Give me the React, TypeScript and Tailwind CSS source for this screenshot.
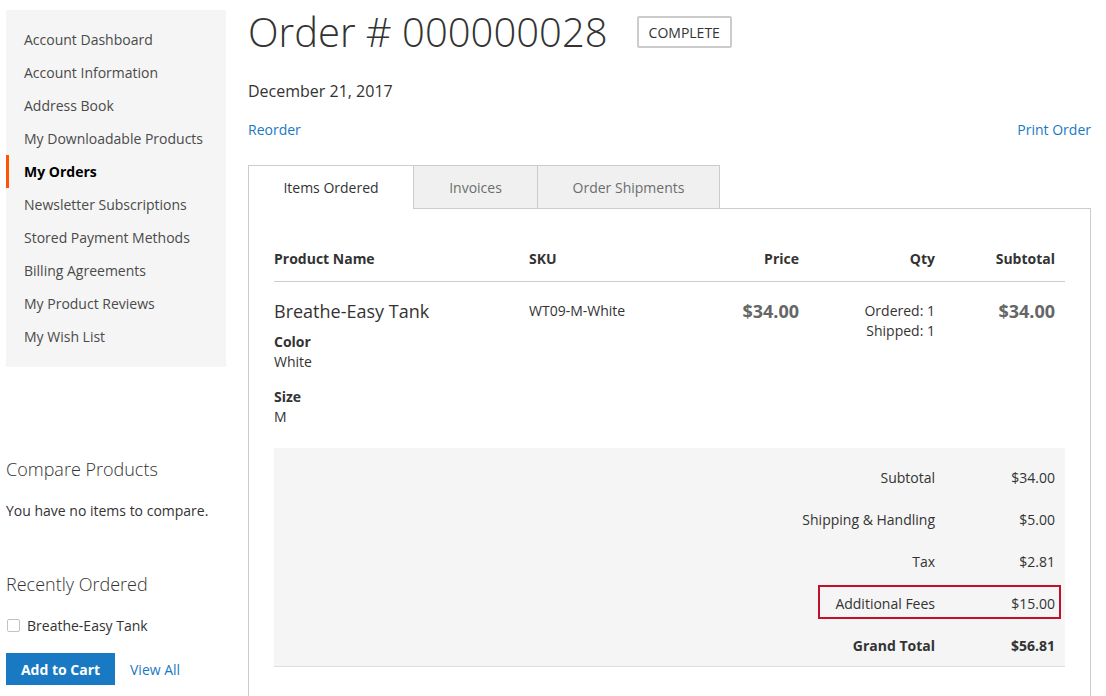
import { Fragment } from "react";

const navItems = [
  "Account Dashboard",
  "Account Information",
  "Address Book",
  "My Downloadable Products",
  "My Orders",
  "Newsletter Subscriptions",
  "Stored Payment Methods",
  "Billing Agreements",
  "My Product Reviews",
  "My Wish List",
];

const totals = [
  { label: "Subtotal", value: "$34.00" },
  { label: "Shipping & Handling", value: "$5.00" },
  { label: "Tax", value: "$2.81" },
  { label: "Additional Fees", value: "$15.00", highlight: true },
  { label: "Grand Total", value: "$56.81", strong: true },
];

function Sidebar() {
  return (
    <aside className="w-[220px] shrink-0 pt-[10px]">
      <nav className="bg-[#f5f5f5] pt-[13px] pb-[14px]">
        {navItems.map((item) =>
          item === "My Orders" ? (
            <div
              key={item}
              className="h-[33px] flex items-center border-l-[3px] border-[#ff5501] pl-[15px] text-[14px] font-bold text-black"
            >
              {item}
            </div>
          ) : (
            <div key={item} className="h-[33px] flex items-center pl-[18px] text-[14px] text-[#4a4a4a]">
              {item}
            </div>
          )
        )}
      </nav>

      <h3 className="mt-[90px] text-[18px] leading-[24px] font-light text-[#333]">Compare Products</h3>
      <p className="mt-[20px] text-[14px] leading-[20px] text-[#333]">You have no items to compare.</p>

      <h3 className="mt-[51px] text-[18px] leading-[24px] font-light text-[#333]">Recently Ordered</h3>
      <div className="mt-[19px] flex items-center h-[20px] text-[14px] text-[#333]">
        <span className="ml-px w-[13px] h-[13px] border border-[#c2c2c2] rounded-[2px] bg-white" />
        <span className="ml-[7px]">Breathe-Easy Tank</span>
      </div>
      <div className="mt-[18px] flex items-center">
        <button className="h-[32px] w-[109px] bg-[#1979c3] text-white text-[14px] font-bold">Add to Cart</button>
        <a className="ml-[15px] text-[14px] text-[#1979c3]">View All</a>
      </div>
    </aside>
  );
}

function OrderTable() {
  return (
    <div className="px-[25px] pt-[40px] pb-[30px]">
      <div className="grid grid-cols-[255px_170px_100px_136px_120px] pr-[10px] border-b border-[#ccc] pb-[12px] text-[14px] leading-[20px] font-bold text-[#333]">
        <div>Product Name</div>
        <div>SKU</div>
        <div className="text-right">Price</div>
        <div className="text-right">Qty</div>
        <div className="text-right">Subtotal</div>
      </div>

      <div className="grid grid-cols-[255px_170px_100px_136px_120px] pr-[10px] pt-[18px] text-[#333]">
        <div>
          <div className="text-[18px] leading-[22px]">Breathe-Easy Tank</div>
          <div className="mt-[10px] text-[14px] leading-[20px] font-bold">Color</div>
          <div className="text-[14px] leading-[20px]">White</div>
          <div className="mt-[15px] text-[14px] leading-[20px] font-bold">Size</div>
          <div className="text-[14px] leading-[20px]">M</div>
        </div>
        <div className="text-[14px] leading-[22px]">WT09-M-White</div>
        <div className="text-right text-[18px] leading-[22px] font-bold text-[#666]">$34.00</div>
        <div className="text-right text-[14px] leading-[20px] mt-px">
          <div>Ordered: 1</div>
          <div>Shipped: 1</div>
        </div>
        <div className="text-right text-[18px] leading-[22px] font-bold text-[#666]">$34.00</div>
      </div>

      <div className="mt-[21px] bg-[#f5f5f5] border-b border-[#ddd] pt-[8px] pr-[10px] text-[14px] text-[#333]">
        {totals.map((t) => (
          <Fragment key={t.label}>
            <div className={`relative h-[42px] flex items-center justify-end ${t.strong ? "font-bold" : ""}`}>
              <span>{t.label}</span>
              <span className="w-[120px] text-right">{t.value}</span>
              {t.highlight && (
                <span className="absolute right-[-6px] top-[3px] w-[243px] h-[34px] border-2 border-[#c0102a]" />
              )}
            </div>
          </Fragment>
        ))}
      </div>
    </div>
  );
}

export default function App() {
  return (
    <div className="w-[1106px] h-[696px] overflow-hidden bg-white font-['Open_Sans',sans-serif] flex pl-[6px]">
      <Sidebar />

      <main className="ml-[22px] w-[843px]">
        <div className="flex items-center pt-[5px]">
          <h1 className="text-[40px] leading-[54px] font-light text-[#333]">Order # 000000028</h1>
          <span className="ml-[29px] h-[32px] px-[10px] flex items-center border-2 border-[#ccc] rounded-[2px] text-[14px] uppercase text-[#333]">
            Complete
          </span>
        </div>

        <div className="mt-[22px] text-[16px] leading-[20px] text-[#333]">December 21, 2017</div>

        <div className="mt-[19px] flex justify-between text-[14px] leading-[20px] text-[#1979c3]">
          <a>Reorder</a>
          <a>Print Order</a>
        </div>

        <div className="mt-[25px] flex text-[14px]">
          <div className="relative z-10 -mb-px h-[44px] w-[166px] flex items-center justify-center bg-white border border-b-0 border-[#ccc] text-[#333]">
            Items Ordered
          </div>
          <div className="h-[43px] w-[124px] flex items-center justify-center bg-[#f0f0f0] border-t border-r border-[#ccc] text-[#6d6d6d]">
            Invoices
          </div>
          <div className="h-[43px] w-[182px] flex items-center justify-center bg-[#f0f0f0] border-t border-r border-[#ccc] text-[#6d6d6d]">
            Order Shipments
          </div>
        </div>

        <div className="border border-[#ccc]">
          <OrderTable />
        </div>
      </main>
    </div>
  );
}
